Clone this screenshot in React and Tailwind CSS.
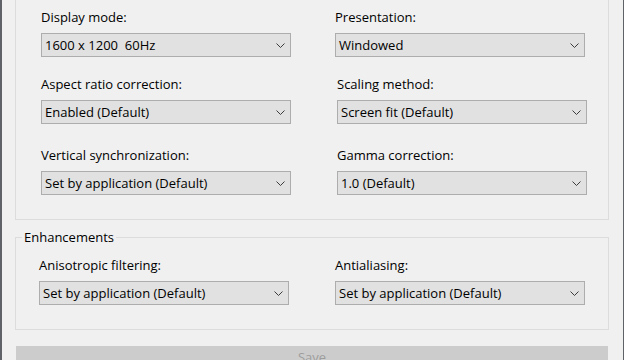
import React from "react";

const FONT = { fontFamily: '"Segoe UI", "Open Sans", "Noto Sans", sans-serif' };

function Chevron() {
  return (
    <svg width="9" height="5" viewBox="0 0 9 5" className="shrink-0">
      <polyline points="0.5,0.5 4.5,4.5 8.5,0.5" fill="none" stroke="#3c3c3c" strokeWidth="1" />
    </svg>
  );
}

function Select({ value }) {
  return (
    <div className="flex items-center justify-between w-[250px] h-[24px] border border-[#adadad] bg-[#e1e1e1] pl-[3px] pr-[5px]">
      <span className="text-[13px] leading-[15px] text-black whitespace-pre">{value}</span>
      <Chevron />
    </div>
  );
}

function Field({ label, value, className = "" }) {
  return (
    <div className={`flex flex-col gap-[8px] ${className}`}>
      <span className="text-[13px] leading-[15px] text-black">{label}</span>
      <Select value={value} />
    </div>
  );
}

export default function App() {
  return (
    <div
      style={FONT}
      className="w-[624px] h-[360px] overflow-hidden bg-[#f0f0f0] border-l-2 border-r border-[#5f6266] pl-[13px] pr-[14px] flex flex-col"
    >
      {/* Display group (top edge scrolled out of view) */}
      <div className="-mt-[11px] border border-[#dcdcdc] pt-[20px] pb-[24px] pl-[25px] flex flex-col">
        <div className="flex">
          <Field label="Display mode:" value="1600 x 1200  60Hz" />
          <Field label="Presentation:" value="Windowed" className="ml-[44px]" />
        </div>
        <div className="flex mt-[20px]">
          <Field label="Aspect ratio correction:" value="Enabled (Default)" />
          <Field label="Scaling method:" value="Screen fit (Default)" className="ml-[46px]" />
        </div>
        <div className="flex mt-[24px]">
          <Field label="Vertical synchronization:" value="Set by application (Default)" />
          <Field label="Gamma correction:" value="1.0 (Default)" className="ml-[46px]" />
        </div>
      </div>

      <fieldset className="mt-[10px] border border-[#dcdcdc] pb-[24px]">
        <legend className="ml-[6px] px-[2px] text-[13px] leading-[15px] text-black">Enhancements</legend>
        <div className="flex mt-[13px] pl-[23px]">
          <Field label="Anisotropic filtering:" value="Set by application (Default)" />
          <Field label="Antialiasing:" value="Set by application (Default)" className="ml-[46px]" />
        </div>
      </fieldset>

      <button className="mt-[16px] ml-[1px] w-[592px] h-[24px] shrink-0 bg-[#cccccc] border border-[#cccccc] text-[13px] text-[#9d9d9d]">
        Save
      </button>
    </div>
  );
}
